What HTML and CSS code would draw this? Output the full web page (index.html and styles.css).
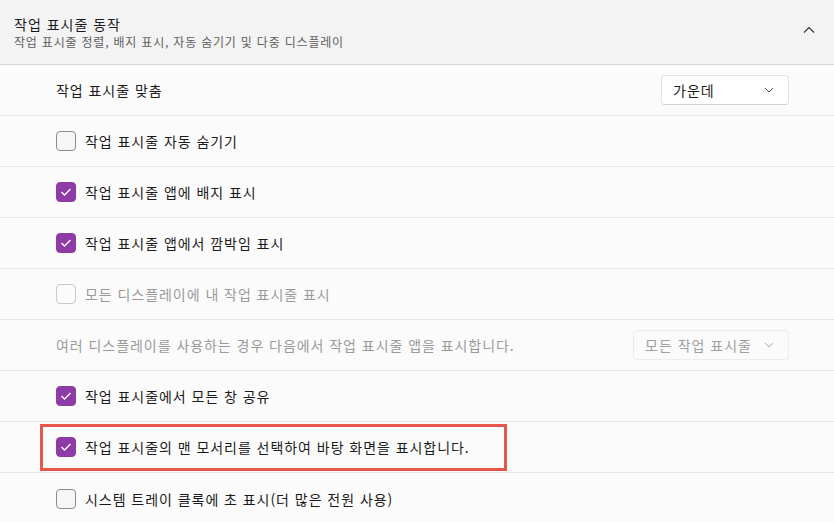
FILE: index.html
```html
<!DOCTYPE html>
<html lang="ko">
<head>
<meta charset="utf-8">
<link rel="stylesheet" href="styles.css">
</head>
<body>
<div class="page">
  <div class="header">
    <div class="head-text">
      <div class="title">작업 표시줄 동작</div>
      <div class="subtitle">작업 표시줄 정렬, 배지 표시, 자동 숨기기 및 다중 디스플레이</div>
    </div>
    <svg class="chev-up" width="12" height="8" viewBox="0 0 12 8"><path d="M1 6.5 L6 1.5 L11 6.5" fill="none" stroke="#333" stroke-width="1.1"/></svg>
  </div>

  <div class="row">
    <span class="label">작업 표시줄 맞춤</span>
    <div class="select">
      <span>가운데</span>
      <svg width="10" height="6" viewBox="0 0 10 6"><path d="M1 1 L5 5 L9 1" fill="none" stroke="#555" stroke-width="1"/></svg>
    </div>
  </div>

  <div class="row">
    <span class="box"></span><span class="label">작업 표시줄 자동 숨기기</span>
  </div>

  <div class="row">
    <span class="box checked"><svg width="12" height="10" viewBox="0 0 12 10"><path d="M1.5 5 L4.5 8 L10.5 2" fill="none" stroke="#fff" stroke-width="1.3"/></svg></span><span class="label">작업 표시줄 앱에 배지 표시</span>
  </div>

  <div class="row">
    <span class="box checked"><svg width="12" height="10" viewBox="0 0 12 10"><path d="M1.5 5 L4.5 8 L10.5 2" fill="none" stroke="#fff" stroke-width="1.3"/></svg></span><span class="label">작업 표시줄 앱에서 깜박임 표시</span>
  </div>

  <div class="row">
    <span class="box disabled"></span><span class="label muted">모든 디스플레이에 내 작업 표시줄 표시</span>
  </div>

  <div class="row">
    <span class="label muted">여러 디스플레이를 사용하는 경우 다음에서 작업 표시줄 앱을 표시합니다.</span>
    <div class="select wide disabled">
      <span>모든 작업 표시줄</span>
      <svg width="10" height="6" viewBox="0 0 10 6"><path d="M1 1 L5 5 L9 1" fill="none" stroke="#aaa" stroke-width="1"/></svg>
    </div>
  </div>

  <div class="row">
    <span class="box checked"><svg width="12" height="10" viewBox="0 0 12 10"><path d="M1.5 5 L4.5 8 L10.5 2" fill="none" stroke="#fff" stroke-width="1.3"/></svg></span><span class="label">작업 표시줄에서 모든 창 공유</span>
  </div>

  <div class="row">
    <div class="highlight">
      <span class="box checked"><svg width="12" height="10" viewBox="0 0 12 10"><path d="M1.5 5 L4.5 8 L10.5 2" fill="none" stroke="#fff" stroke-width="1.3"/></svg></span><span class="label">작업 표시줄의 맨 모서리를 선택하여 바탕 화면을 표시합니다.</span>
    </div>
  </div>

  <div class="row last">
    <span class="box"></span><span class="label">시스템 트레이 클록에 초 표시(더 많은 전원 사용)</span>
  </div>
</div>
</body>
</html>
```

FILE: styles.css
```css
* { box-sizing: border-box; }
html, body {
  margin: 0;
  padding: 0;
  background: #fbfbfb;
}
body {
  font-family: "Noto Sans CJK KR", "Noto Sans", sans-serif;
  color: #1b1b1b;
  width: 834px;
  height: 522px;
  overflow: hidden;
}
.page {
  width: 834px;
}
.header {
  height: 65px;
  background: #f3f3f3;
  border-bottom: 1px solid #d6d6d6;
  display: flex;
  align-items: center;
  justify-content: space-between;
  padding: 0 19px 0 14px;
}
.head-text {
  display: flex;
  flex-direction: column;
  margin-top: -1px;
}
.title {
  font-size: 14px;
  line-height: 20px;
  letter-spacing: 1px;
  color: #1b1b1b;
}
.subtitle {
  font-size: 12px;
  line-height: 15px;
  letter-spacing: 0.8px;
  color: #5f5f5f;
}
.chev-up {
  margin-top: -4px;
}
.row {
  height: 51px;
  border-bottom: 1px solid #e6e6e6;
  display: flex;
  align-items: center;
  padding: 0 45px 0 56px;
  background: #fbfbfb;
}
.row.last {
  border-bottom: none;
}
.label {
  font-size: 14px;
  line-height: 20px;
  letter-spacing: 0.95px;
  color: #1b1b1b;
}
.label.muted {
  color: #9a9a9a;
}
.box {
  width: 20px;
  height: 20px;
  border: 1px solid #8b8b8b;
  border-radius: 4px;
  background: #f6f6f6;
  margin-right: 9px;
  flex: none;
  display: flex;
  align-items: center;
  justify-content: center;
}
.box.checked {
  background: #8e3ba8;
  border-color: #8e3ba8;
}
.box.disabled {
  border-color: #c9c9c9;
  background: #fbfbfb;
}
.select {
  margin-left: auto;
  width: 128px;
  height: 30px;
  border: 1px solid #e3e3e3;
  border-bottom-color: #d2d2d2;
  border-radius: 4px;
  background: #ffffff;
  display: flex;
  align-items: center;
  justify-content: space-between;
  padding: 0 14px 0 11px;
  font-size: 14px;
  letter-spacing: 1px;
  color: #1b1b1b;
}
.select.wide {
  width: 156px;
}
.select.disabled {
  background: #fbfbfb;
  color: #a0a0a0;
  border-color: #ececec;
}
.highlight {
  display: flex;
  align-items: center;
  margin-left: -16px;
  height: 47px;
  padding: 0 34px 0 13px;
  border: 3px solid #e9564c;
}
```
